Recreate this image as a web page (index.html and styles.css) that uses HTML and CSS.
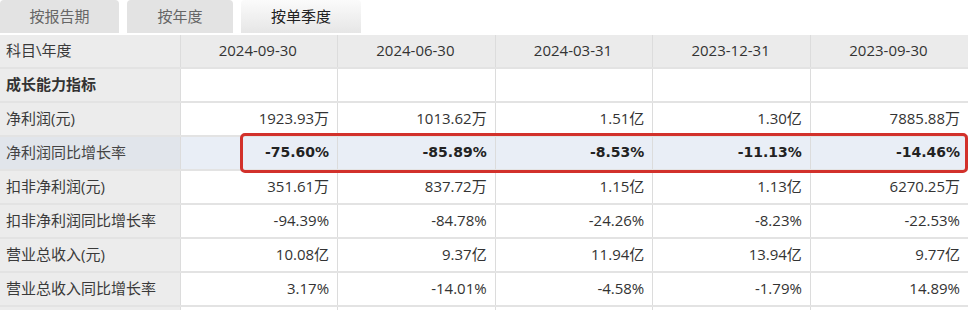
FILE: index.html
```html
<!DOCTYPE html>
<html lang="zh-CN">
<head>
    <meta charset="UTF-8">
    <title>成长能力指标</title>
    <link rel="stylesheet" href="styles.css">
</head>
<body>
    <!-- tabs -->
    <div class="tabs">
        <div class="tab tab-report">按报告期</div>
        <div class="tab tab-year">按年度</div>
        <div class="tab tab-quarter active">按单季度</div>
    </div>

    <div class="table-wrap">
        <table class="data-table">
            <colgroup>
                <col class="col-label">
                <col><col><col><col><col>
            </colgroup>
            <thead>
                <tr>
                    <th class="label">科目\年度</th>
                    <th>2024-09-30</th>
                    <th>2024-06-30</th>
                    <th>2024-03-31</th>
                    <th>2023-12-31</th>
                    <th>2023-09-30</th>
                </tr>
            </thead>
            <tbody>
                <tr>
                    <td class="label section">成长能力指标</td>
                    <td></td><td></td><td></td><td></td><td></td>
                </tr>
                <tr>
                    <td class="label">净利润(元)</td>
                    <td>1923.93万</td><td>1013.62万</td><td>1.51亿</td><td>1.30亿</td><td>7885.88万</td>
                </tr>
                <tr class="highlight">
                    <td class="label">净利润同比增长率</td>
                    <td>-75.60%</td><td>-85.89%</td><td>-8.53%</td><td>-11.13%</td><td>-14.46%</td>
                </tr>
                <tr>
                    <td class="label">扣非净利润(元)</td>
                    <td>351.61万</td><td>837.72万</td><td>1.15亿</td><td>1.13亿</td><td>6270.25万</td>
                </tr>
                <tr>
                    <td class="label">扣非净利润同比增长率</td>
                    <td>-94.39%</td><td>-84.78%</td><td>-24.26%</td><td>-8.23%</td><td>-22.53%</td>
                </tr>
                <tr>
                    <td class="label">营业总收入(元)</td>
                    <td>10.08亿</td><td>9.37亿</td><td>11.94亿</td><td>13.94亿</td><td>9.77亿</td>
                </tr>
                <tr>
                    <td class="label">营业总收入同比增长率</td>
                    <td>3.17%</td><td>-14.01%</td><td>-4.58%</td><td>-1.79%</td><td>14.89%</td>
                </tr>
                <tr class="blank">
                    <td class="label"></td>
                    <td></td><td></td><td></td><td></td><td></td>
                </tr>
            </tbody>
        </table>
        <!-- red marker around the yoy row -->
        <div class="mark"></div>
    </div>
</body>
</html>
```

FILE: styles.css
```css
body {
    margin: 0;
    background-color: #fff;
    font-family: "Open Sans", "Noto Sans CJK SC", sans-serif;
    color: #333;
    width: 970px;
    height: 310px;
    overflow: hidden;
}

/* Tabs */
.tabs {
    display: flex;
    height: 33px;
    margin-bottom: 2px;
}
.tab {
    height: 33px;
    line-height: 32px;
    text-align: center;
    font-size: 15px;
    color: #666;
    background-color: #e3e3e3;
    border-radius: 4px 4px 0 0;
    margin-right: 8px;
}
.tab-report {
    width: 119px;
}
.tab-year {
    width: 106px;
}
.tab-quarter {
    width: 120px;
}
.tab.active {
    color: #222;
    background-image: linear-gradient(to bottom, #fbfbfb, #e6e6e6);
}

/* Table */
.table-wrap {
    position: relative;
}
.data-table {
    width: 968px;
    border-collapse: collapse;
    table-layout: fixed;
    font-size: 15px;
}
.col-label {
    width: 180px;
}
.data-table th,
.data-table td {
    height: 20px;
    line-height: 20px;
    padding: 5px 8px 7px 6px;
    border-bottom: 2px solid #e3e3e3;
    border-left: 1px solid #dcdcdc;
    white-space: nowrap;
    text-align: right;
    font-weight: normal;
    color: #333;
}
.data-table th {
    background-color: #ebebeb;
    text-align: center;
}
.data-table th.label,
.data-table td.label {
    text-align: left;
    border-left: none;
    background-color: #ececec;
    color: #3a3a3a;
}
.data-table td.section {
    font-weight: bold;
    color: #333;
}
.data-table tr.highlight td {
    background-color: #e9eef6;
    font-family: "DejaVu Sans", "Noto Sans CJK SC", sans-serif;
    font-weight: bold;
    font-size: 14px;
    color: #222;
}
.data-table tr.highlight td.label {
    background-color: #e1e5eb;
    font-family: "Open Sans", "Noto Sans CJK SC", sans-serif;
    font-weight: normal;
    font-size: 15px;
    color: #444;
}

.mark {
    position: absolute;
    left: 240px;
    top: 98px;
    width: 722px;
    height: 34px;
    border: 3px solid #d2312b;
    border-radius: 5px;
}
```
